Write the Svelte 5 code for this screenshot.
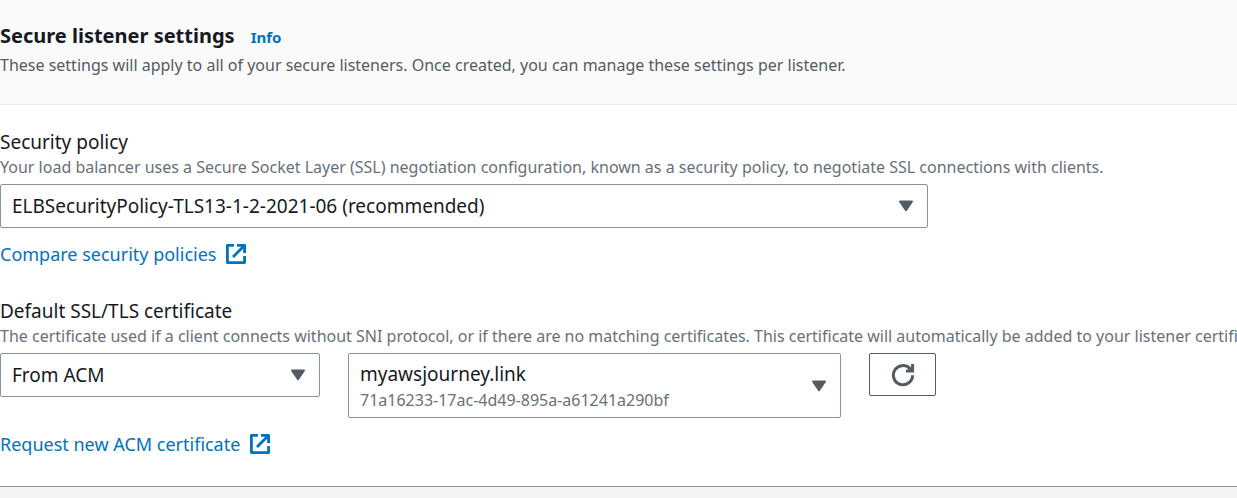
<script>
  let policy = $state('ELBSecurityPolicy-TLS13-1-2-2021-06 (recommended)');
  let source = $state('From ACM');
  let certificate = $state('myawsjourney.link');
  const certificateIds = {
    'myawsjourney.link': '71a16233-17ac-4d49-895a-a61241a290bf'
  };
</script>

{#snippet caret()}
  <svg class="caret" viewBox="0 0 16 12" aria-hidden="true">
    <path d="M2 1.5h12L8 10.3z" />
  </svg>
{/snippet}

{#snippet external()}
  <svg class="external" viewBox="0 0 20 20" aria-hidden="true">
    <path d="M8 1.4H1.4v17.2h17.2V12" />
    <path d="M11 1.4h7.6V9M18.2 1.8 7 13" />
  </svg>
{/snippet}

<section class="panel">
  <header>
    <div class="title">
      <h2>Secure listener settings</h2>
      <a class="info" href="#info">Info</a>
    </div>
    <p>These settings will apply to all of your secure listeners. Once created, you can manage these settings per listener.</p>
  </header>

  <div class="content">
    <div class="field">
      <label for="policy">Security policy</label>
      <p id="policy-help">Your load balancer uses a Secure Socket Layer (SSL) negotiation configuration, known as a security policy, to negotiate SSL connections with clients.</p>
      <div class="dropdown wide">
        <select id="policy" aria-describedby="policy-help" bind:value={policy}>
          <option>ELBSecurityPolicy-TLS13-1-2-2021-06 (recommended)</option>
        </select>
        {@render caret()}
      </div>
      <a class="link" href="#policies">Compare security policies {@render external()}</a>
    </div>

    <div class="field">
      <label for="source">Default SSL/TLS certificate</label>
      <p id="source-help">The certificate used if a client connects without SNI protocol, or if there are no matching certificates. This certificate will automatically be added to your listener certificate list.</p>
      <div class="row">
        <div class="dropdown">
          <select id="source" aria-describedby="source-help" bind:value={source}>
            <option>From ACM</option>
          </select>
          {@render caret()}
        </div>
        <div class="dropdown detailed">
          <select aria-label="Certificate" aria-describedby="certificate-id" bind:value={certificate}>
            <option>myawsjourney.link</option>
          </select>
          <span class="detail" id="certificate-id">{certificateIds[certificate]}</span>
          {@render caret()}
        </div>
        <button type="button" aria-label="Refresh certificates">
          <svg viewBox="0 0 24 24" aria-hidden="true">
            <path d="M21.6 12.2A9.6 9.6 0 1 1 18.8 5.4L20.6 7.2" />
            <path d="M21.6 1v7H15" />
          </svg>
        </button>
      </div>
      <a class="link" href="#request">Request new ACM certificate {@render external()}</a>
    </div>
  </div>
</section>

<style>
  :global(body) {
    background: #f2f3f3;
    color: #16191f;
    font-family: "Noto Sans", "Open Sans", sans-serif;
  }
  .panel {
    background: #fff;
    border-bottom: 1px solid #879596;
    box-shadow: 0 1px 1px #c8cecf;
    overflow: hidden;
  }
  header {
    background: #fafafa;
    border-bottom: 1px solid #eaeded;
    padding: 19px 0 27px;
  }
  .title {
    display: flex;
    align-items: baseline;
    gap: 16px;
  }
  h2, p {
    margin: 0;
  }
  h2 {
    font-size: 20px;
    line-height: 34px;
    font-weight: 700;
  }
  a {
    color: #0073bb;
    text-decoration: none;
  }
  .info {
    font-size: 15px;
    font-weight: 700;
  }
  p {
    color: #687078;
    font-size: 16px;
    line-height: 24px;
    white-space: nowrap;
  }
  header p {
    color: #545b64;
  }
  .content {
    display: flex;
    flex-direction: column;
    gap: 30px;
    padding: 24px 0 28px;
  }
  .field {
    display: flex;
    flex-direction: column;
    align-items: flex-start;
  }
  .field p {
    margin-bottom: 5px;
  }
  label {
    font-size: 19px;
    line-height: 26px;
  }
  .dropdown {
    display: grid;
    width: 100%;
    align-items: center;
  }
  .wide {
    width: 75%;
  }
  .dropdown > * {
    grid-area: 1 / 1;
  }
  select {
    appearance: none;
    width: 100%;
    height: 44px;
    padding: 0 48px 0 11px;
    border: 1px solid #879596;
    border-radius: 2px;
    background: #fff;
    color: #16191f;
    font: 19px/28px "Noto Sans", "Open Sans", sans-serif;
  }
  .detailed select {
    height: 65px;
    padding-bottom: 23px;
  }
  .detail {
    align-self: end;
    padding: 0 48px 6px 12px;
    color: #687078;
    font-size: 16px;
    line-height: 24px;
    pointer-events: none;
  }
  .caret {
    justify-self: end;
    width: 16px;
    height: 12px;
    margin-right: 14px;
    fill: #545b64;
    stroke: #545b64;
    stroke-width: 2;
    stroke-linejoin: round;
    pointer-events: none;
  }
  .row {
    display: grid;
    grid-template-columns: minmax(0, 320px) minmax(0, 493px) auto;
    align-items: start;
    gap: 28px;
  }
  button {
    display: flex;
    align-items: center;
    justify-content: center;
    width: 67px;
    height: 43px;
    padding: 0;
    border: 1px solid #545b64;
    border-radius: 2px;
    background: #fff;
  }
  button svg {
    width: 24px;
    height: 24px;
    fill: none;
    stroke: #545b64;
    stroke-width: 3;
  }
  .link {
    display: flex;
    align-items: center;
    gap: 10px;
    margin-top: 12px;
    font-size: 18px;
    line-height: 28px;
  }
  .external {
    width: 20px;
    height: 20px;
    fill: none;
    stroke: currentColor;
    stroke-width: 2.8;
    stroke-linejoin: round;
  }
</style>
